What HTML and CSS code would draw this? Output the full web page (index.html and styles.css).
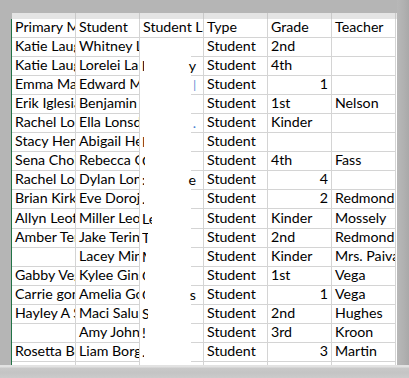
FILE: index.html
```html
<!DOCTYPE html>
<html>
<head>
<meta charset="utf-8">
<link rel="stylesheet" href="styles.css">
</head>
<body>
<div class="screen">
  <div class="top">
    <div class="sheet">
      <div class="colhead">
        <div></div><div></div><div></div><div></div><div></div><div></div><div class="edge"></div>
      </div>
      <div class="grid">
        <div class="c">Primary Member</div><div class="c">Student</div><div class="c">Student Last Name</div><div class="c">Type</div><div class="c">Grade</div><div class="c">Teacher</div><div class="x"></div>

        <div class="c">Katie Laughlin</div><div class="c">Whitney Laughlin</div><div class="c r"></div><div class="c">Student</div><div class="c">2nd</div><div class="c"></div><div class="x"></div>

        <div class="c">Katie Laughlin</div><div class="c">Lorelei Laughlin</div><div class="c r"><span class="frag w1">l</span><span class="tail">y</span></div><div class="c">Student</div><div class="c">4th</div><div class="c"></div><div class="x"></div>

        <div class="c">Emma Martinez</div><div class="c">Edward Martinez</div><div class="c r"><span class="tail bar">|</span></div><div class="c">Student</div><div class="c num">1</div><div class="c"></div><div class="x"></div>

        <div class="c">Erik Iglesias</div><div class="c">Benjamin Iglesias</div><div class="c r"></div><div class="c">Student</div><div class="c">1st</div><div class="c">Nelson</div><div class="x"></div>

        <div class="c">Rachel Lonsdale</div><div class="c">Ella Lonsdale</div><div class="c r"><span class="tail dot">.</span></div><div class="c">Student</div><div class="c">Kinder</div><div class="c"></div><div class="x"></div>

        <div class="c">Stacy Henderson</div><div class="c">Abigail Henderson</div><div class="c r"><span class="frag w1">H</span></div><div class="c">Student</div><div class="c"></div><div class="c"></div><div class="x"></div>

        <div class="c">Sena Choi</div><div class="c">Rebecca Choi</div><div class="c r"><span class="frag w2">C</span></div><div class="c">Student</div><div class="c">4th</div><div class="c">Fass</div><div class="x"></div>

        <div class="c">Rachel Lonsdale</div><div class="c">Dylan Lonsdale</div><div class="c r"><span class="frag w1">:</span><span class="tail">e</span></div><div class="c">Student</div><div class="c num">4</div><div class="c"></div><div class="x"></div>

        <div class="c">Brian Kirkland</div><div class="c">Eve Dorojan</div><div class="c r"><span class="frag w1">.</span></div><div class="c">Student</div><div class="c num">2</div><div class="c">Redmond</div><div class="x"></div>

        <div class="c">Allyn Leofsky</div><div class="c">Miller Leofsky</div><div class="c r"><span class="frag w10">Leofsky</span></div><div class="c">Student</div><div class="c">Kinder</div><div class="c">Mossely</div><div class="x"></div>

        <div class="c">Amber Terino</div><div class="c">Jake Terino</div><div class="c r"><span class="frag w6">Terino</span></div><div class="c">Student</div><div class="c">2nd</div><div class="c">Redmond</div><div class="x"></div>

        <div class="c"></div><div class="c">Lacey Minton</div><div class="c r"><span class="frag w3">Minton</span></div><div class="c">Student</div><div class="c">Kinder</div><div class="c">Mrs. Paiva</div><div class="x"></div>

        <div class="c">Gabby Vega</div><div class="c">Kylee Ginsberg</div><div class="c r"><span class="frag w2">Ginsberg</span></div><div class="c">Student</div><div class="c">1st</div><div class="c">Vega</div><div class="x"></div>

        <div class="c">Carrie gonzales</div><div class="c">Amelia Gonzales</div><div class="c r"><span class="frag w2">Gonzales</span><span class="tail">s</span></div><div class="c">Student</div><div class="c num">1</div><div class="c">Vega</div><div class="x"></div>

        <div class="c">Hayley A Salus</div><div class="c">Maci Salus</div><div class="c r"><span class="frag w6">Salus</span></div><div class="c">Student</div><div class="c">2nd</div><div class="c">Hughes</div><div class="x"></div>

        <div class="c"></div><div class="c">Amy Johnson</div><div class="c r"><span class="frag w2">!</span></div><div class="c">Student</div><div class="c">3rd</div><div class="c">Kroon</div><div class="x"></div>

        <div class="c">Rosetta Borg</div><div class="c">Liam Borg</div><div class="c r"><span class="frag w1">.</span></div><div class="c">Student</div><div class="c num">3</div><div class="c">Martin</div><div class="x"></div>

        <div class="c">·</div><div class="c"></div><div class="c"></div><div class="c"></div><div class="c"></div><div class="c"></div><div class="x"></div>
      </div>
    </div>
    <div class="rightside"></div>
  </div>
  <div class="bottom"></div>
</div>
</body>
</html>
```

FILE: styles.css
```css
html, body {
  margin: 0;
  padding: 0;
}
body {
  width: 409px;
  height: 378px;
  overflow: hidden;
  background: #b5b5b5;
  font-family: Lato, "Noto Sans", sans-serif;
}
.screen {
  width: 409px;
  height: 378px;
  display: flex;
  flex-direction: column;
}
.top {
  display: flex;
  height: 365px;
  padding-left: 11px;
  box-sizing: border-box;
}
.sheet {
  margin-top: 13px;
  width: 386px;
  height: 352px;
  overflow: hidden;
  display: flex;
  flex-direction: column;
}
.colhead {
  display: grid;
  grid-template-columns: repeat(6, 64px) 1px;
  height: 5.5px;
  margin-left: 1px;
  background: #e4e4e4;
  flex: none;
}
.colhead div {
  border-right: 1px solid #c9c9c9;
}
.colhead .edge {
  border-right: none;
}
.grid {
  display: grid;
  grid-template-columns: repeat(6, 64px) 1px;
  grid-auto-rows: 19.1px;
  border-left: 1px solid #217346;
  background: #fff;
  color: #000;
  font-size: 14.2px;
}
.c {
  border-right: 1px solid #d4d4d4;
  border-bottom: 1px solid #d4d4d4;
  padding: 0 0 1px 3px;
  display: flex;
  align-items: flex-end;
  line-height: 18px;
  white-space: nowrap;
  overflow: hidden;
  min-width: 0;
}
.x {
  background: #fff;
}
.num {
  justify-content: flex-end;
  padding-right: 3px;
}
.r {
  border-bottom: none;
  padding-left: 2px;
  padding-right: 0;
  background: linear-gradient(#d4d4d4, #d4d4d4) no-repeat right bottom / 12px 1px;
}
.frag {
  display: inline-block;
  overflow: hidden;
  white-space: nowrap;
}
.w1 { width: 2px; }
.w2 { width: 3px; }
.w3 { width: 4px; }
.w6 { width: 6px; }
.w10 { width: 10px; }
.tail {
  margin-left: auto;
  margin-right: 7px;
}
.bar {
  color: #4a7fd0;
  font-size: 11px;
}
.dot {
  color: #4a7fd0;
}
.rightside {
  flex: 1;
  background: linear-gradient(to right, #b8b8b8, #b0b0b0 60%, #a9a9a9);
}
.bottom {
  flex: 1;
  background: linear-gradient(#e2e2e2 0, #e2e2e2 2px, #c9c9c9 3px, #c4c4c4 60%, #cbcbcb);
}
```
